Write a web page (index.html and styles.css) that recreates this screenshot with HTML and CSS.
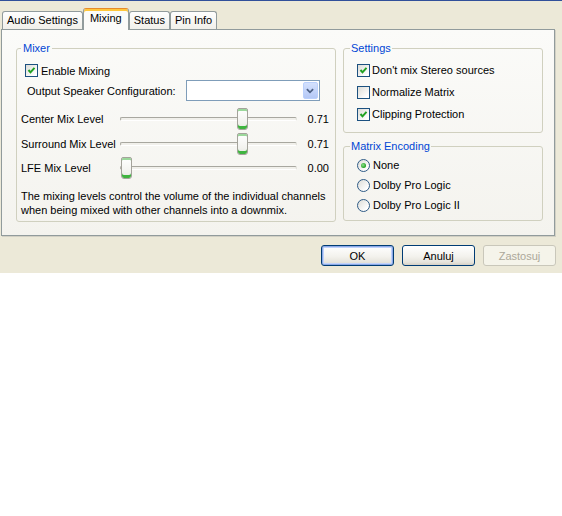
FILE: index.html
```html
<!DOCTYPE html>
<html lang="en">
<head>
  <meta charset="UTF-8">
  <title>Mixing</title>
  <link rel="stylesheet" href="styles.css">
</head>
<body>
  <div class="dialog">
    <div class="tabs">
      <div class="tab">Audio Settings</div>
      <div class="tab active">Mixing</div>
      <div class="tab">Status</div>
      <div class="tab">Pin Info</div>
    </div>

    <div class="page">
      <fieldset class="group mixer">
        <legend>Mixer</legend>
        <div class="opt enable">
          <span class="check"><svg viewBox="0 0 11 11"><polyline points="2.5,5 4.5,7.3 8.5,2.8"/></svg></span>
          Enable Mixing
        </div>
        <div class="speaker">
          <span>Output Speaker Configuration:</span>
          <div class="combo">
            <span class="drop"><svg viewBox="0 0 9 6"><polyline points="1,1 4.5,4.5 8,1"/></svg></span>
          </div>
        </div>
        <div class="level first">
          <span>Center Mix Level</span>
          <div class="track"><span class="thumb" style="--v: 0.71"></span></div>
          <span class="val">0.71</span>
        </div>
        <div class="level">
          <span>Surround Mix Level</span>
          <div class="track"><span class="thumb" style="--v: 0.71"></span></div>
          <span class="val">0.71</span>
        </div>
        <div class="level">
          <span>LFE Mix Level</span>
          <div class="track"><span class="thumb" style="--v: 0"></span></div>
          <span class="val">0.00</span>
        </div>
        <p class="note">The mixing levels control the volume of the individual channels<br>when being mixed with other channels into a downmix.</p>
      </fieldset>

      <div class="side">
        <fieldset class="group settings">
          <legend>Settings</legend>
          <div class="opt">
            <span class="check"><svg viewBox="0 0 11 11"><polyline points="2.5,5 4.5,7.3 8.5,2.8"/></svg></span>
            Don't mix Stereo sources
          </div>
          <div class="opt">
            <span class="check"></span>
            Normalize Matrix
          </div>
          <div class="opt">
            <span class="check"><svg viewBox="0 0 11 11"><polyline points="2.5,5 4.5,7.3 8.5,2.8"/></svg></span>
            Clipping Protection
          </div>
        </fieldset>

        <fieldset class="group matrix">
          <legend>Matrix Encoding</legend>
          <div class="opt"><span class="radio on"></span>None</div>
          <div class="opt"><span class="radio"></span>Dolby Pro Logic</div>
          <div class="opt"><span class="radio"></span>Dolby Pro Logic II</div>
        </fieldset>
      </div>
    </div>

    <div class="buttons">
      <button class="btn default">OK</button>
      <button class="btn">Anuluj</button>
      <button class="btn" disabled>Zastosuj</button>
    </div>
  </div>
</body>
</html>
```

FILE: styles.css
```css
body {
  margin: 0;
  background: #fff;
  font-family: "Liberation Sans", Arial, sans-serif;
  font-size: 11px;
  color: #000;
}

.dialog {
  box-sizing: border-box;
  height: 273px;
  background: #ece9d8;
  border-top: 1px solid #31509a;
}

/* tab strip */
.tabs {
  display: flex;
  align-items: flex-end;
  padding: 7px 0 0 2px;
}

.tab {
  box-sizing: border-box;
  height: 18px;
  line-height: 17px;
  padding: 0 4px;
  border: 1px solid #919b9c;
  border-bottom: none;
  border-radius: 3px 3px 0 0;
  background: linear-gradient(#fefefe, #f1f0ea);
}

.tab.active {
  position: relative;
  z-index: 1;
  height: 22px;
  line-height: 15px;
  padding: 2px 6px 0;
  margin-bottom: -1px;
  border-top-color: #e68b2c;
  background: #fbfbf9;
  box-shadow: inset 0 2px 0 #ffc73c;
}

.page {
  box-sizing: border-box;
  height: 207px;
  margin: 0 7px 0 1px;
  padding: 12px 0 0 14px;
  border: 1px solid #919b9c;
  box-shadow: 1px 1px 0 #d2d0c4;
  background: linear-gradient(#fbfbf9, #f4f3ee);
  display: grid;
  grid-template-columns: 320px 200px;
  column-gap: 7px;
  align-items: start;
}

/* group boxes */
.group {
  margin: 0;
  min-width: 0;
  border: 1px solid #d0d0bf;
  border-radius: 3px;
}

.group legend {
  padding: 0 2px;
  line-height: 13px;
  color: #0046d5;
}

.mixer {
  padding: 0 6px 4px 4px;
}

.side {
  display: flex;
  flex-direction: column;
  gap: 7px;
}

.settings {
  padding: 4px 6px 7px 6px;
}

.settings legend,
.matrix legend {
  padding: 0 1px;
}

.matrix {
  padding: 2px 6px 5px 6px;
}

.opt {
  display: flex;
  align-items: center;
  gap: 2px;
  height: 22px;
  margin-left: 7px;
}

.matrix .opt {
  height: 20px;
  gap: 3px;
}

.enable {
  height: 15px;
  margin: 8px 0 0 4px;
  gap: 3px;
}

.check {
  box-sizing: border-box;
  width: 13px;
  height: 13px;
  border: 1px solid #1c5180;
  background: linear-gradient(135deg, #dcdcd7, #fff 85%);
  display: flex;
}

.check svg {
  width: 11px;
  height: 11px;
  fill: none;
  stroke: #21a121;
  stroke-width: 2;
}

.radio {
  box-sizing: border-box;
  position: relative;
  width: 13px;
  height: 13px;
  border: 1px solid #2f5b86;
  border-radius: 50%;
  background: linear-gradient(135deg, #dcdcd7, #fff 80%);
}

.radio.on::after {
  content: "";
  position: absolute;
  left: 3px;
  top: 3px;
  width: 5px;
  height: 5px;
  border-radius: 50%;
  background: radial-gradient(circle at 40% 40%, #8fe08f, #21a121 70%);
}

/* speaker config combo */
.speaker {
  display: flex;
  align-items: center;
  gap: 10px;
  height: 21px;
  margin: 2px 0 0 6px;
}

.combo {
  box-sizing: border-box;
  width: 134px;
  height: 21px;
  padding: 1px;
  border: 1px solid #7f9db9;
  background: #fff;
  display: flex;
  justify-content: flex-end;
}

.drop {
  box-sizing: border-box;
  width: 15px;
  height: 17px;
  border: 1px solid #bad0fc;
  border-radius: 2px;
  background: linear-gradient(#d4e1fd, #b4c8f6);
  display: flex;
  align-items: center;
  justify-content: center;
}

.drop svg {
  width: 8px;
  height: 6px;
  fill: none;
  stroke: #4d6185;
  stroke-width: 2;
}

/* level sliders */
.level {
  display: grid;
  grid-template-columns: 99px 177px 1fr;
  align-items: center;
  height: 24.5px;
}

.level.first {
  margin-top: 6px;
}

.track {
  position: relative;
  box-sizing: border-box;
  height: 4px;
  border: 1px solid #a8a79f;
  border-right-color: #e0dfd8;
  border-bottom-color: #fff;
  border-radius: 2px;
  background: #f1f0eb;
}

.thumb {
  position: absolute;
  top: -10px;
  left: calc(var(--v) * (100% - 11px));
  box-sizing: border-box;
  width: 11px;
  height: 22px;
  border: 1px solid #a4a39b;
  border-radius: 2px 2px 3px 3px;
  background: linear-gradient(#fff, #f2f2ee 70%, #e6e6e0);
  box-shadow: inset 0 2px 0 #9bd89b, inset 0 -3px 0 #3fb43f;
}

.val {
  text-align: right;
}

.note {
  margin: 8px 0 0;
  line-height: 14px;
}

/* bottom buttons */
.buttons {
  display: flex;
  justify-content: flex-end;
  gap: 8px;
  margin-top: 9px;
  padding-right: 6px;
}

.btn {
  box-sizing: border-box;
  width: 73px;
  height: 21px;
  padding: 0;
  border: 1px solid #003c74;
  border-radius: 3px;
  background: linear-gradient(#fff, #f3f2ed 55%, #e6e4dc 85%, #d6d0c5);
  font: inherit;
  color: #000;
}

.btn.default {
  box-shadow: inset 0 0 0 1px #8ca9e6, inset 0 0 0 2px #c1d3fb;
}

.btn:disabled {
  border-color: #c9c7ba;
  background: #f5f4ea;
  color: #aca899;
}
```
